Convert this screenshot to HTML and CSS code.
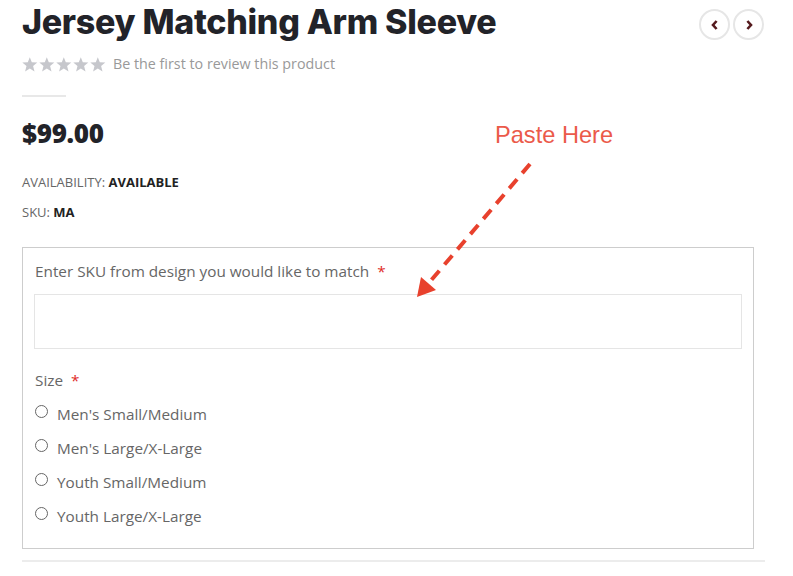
FILE: index.html
```html
<!DOCTYPE html>
<html>
<head>
<meta charset="utf-8">
<link rel="stylesheet" href="styles.css">
</head>
<body>
<div class="page">
  <div class="head">
    <h1 class="title">Jersey Matching Arm Sleeve</h1>
    <div class="nav">
      <span class="navbtn"><svg width="12" height="12" viewBox="0 0 12 12"><path d="M7.6 2 L4 6 L7.6 10" fill="none" stroke="#551a1e" stroke-width="2.6"/></svg></span>
      <span class="navbtn"><svg width="12" height="12" viewBox="0 0 12 12"><path d="M4.4 2 L8 6 L4.4 10" fill="none" stroke="#551a1e" stroke-width="2.6"/></svg></span>
    </div>
  </div>
  <div class="rating">
    <span class="stars">
      <svg width="85" height="16" viewBox="0 0 85 16">
        <g fill="#c6c7cc">
          <path id="st" d="M7.8 0.2 L9.8 5.3 L15.3 5.6 L11.1 9.1 L12.5 14.5 L7.8 11.5 L3.1 14.5 L4.5 9.1 L0.3 5.6 L5.8 5.3 Z"/>
          <use href="#st" x="17"/>
          <use href="#st" x="34"/>
          <use href="#st" x="51"/>
          <use href="#st" x="68"/>
        </g>
      </svg>
    </span>
    <span class="review">Be the first to review this product</span>
  </div>
  <div class="shortline"></div>
  <div class="price">$99.00</div>
  <div class="meta">AVAILABILITY: <b>AVAILABLE</b></div>
  <div class="meta sku">SKU: <b>MA</b></div>
  <div class="options">
    <div class="label">Enter SKU from design you would like to match <span class="req">*</span></div>
    <div class="input"></div>
    <div class="label size">Size <span class="req">*</span></div>
    <div class="radios">
      <label class="radio"><span class="circle"></span>Men's Small/Medium</label>
      <label class="radio"><span class="circle"></span>Men's Large/X-Large</label>
      <label class="radio"><span class="circle"></span>Youth Small/Medium</label>
      <label class="radio"><span class="circle"></span>Youth Large/X-Large</label>
    </div>
  </div>
  <div class="bottomline"></div>

  <div class="annot-text">Paste Here</div>
  <svg class="annot-arrow" width="793" height="576" viewBox="0 0 793 576">
    <line x1="530" y1="164" x2="428" y2="284" stroke="#e8412d" stroke-width="4" stroke-dasharray="12 8"/>
    <polygon points="417,297 421,277 436,290" fill="#e8412d"/>
  </svg>
</div>
</body>
</html>
```
FILE: styles.css
```css
html, body { margin: 0; padding: 0; background: #fff; }
body { font-family: "Open Sans", "Liberation Sans", sans-serif; color: #222; }
.page { position: relative; width: 793px; height: 576px; padding: 0 28px 0 22px; box-sizing: border-box; overflow: hidden; }
.head { display: flex; justify-content: space-between; align-items: flex-start; }
.title { margin: 0; font-family: "Inter", sans-serif; font-weight: 800; font-size: 34px; line-height: 44px; color: #222329; letter-spacing: -0.3px; }
.nav { display: flex; gap: 3px; margin-top: 9px; margin-right: 1px; }
.navbtn { width: 27px; height: 27px; border: 2px solid #e6e6e6; border-radius: 50%; display: flex; align-items: center; justify-content: center; }
.rating { display: flex; align-items: center; gap: 6px; margin-top: 10px; height: 20px; }
.stars { display: flex; padding-top: 1px; }
.review { font-size: 14.3px; color: #999; line-height: 20px; }
.shortline { width: 44px; height: 2px; background: #e8e8e8; margin-top: 21px; }
.price { font-family: "Open Sans", sans-serif; font-weight: 800; font-size: 26px; line-height: 32px; margin-top: 20px; color: #222329; letter-spacing: -0.3px; }
.meta { font-size: 13px; color: #666; margin-top: 25px; line-height: 16px; }
.meta b { color: #222; font-weight: 700; }
.meta.sku { margin-top: 14px; }
.options { margin-top: 27px; width: 732px; border: 1px solid #cdcdcd; box-sizing: border-box; padding: 13px 11px 22px 11px; }
.label { font-size: 15.3px; color: #666; line-height: 20px; padding-left: 1px; }
.req { color: #e02b27; margin-left: 4px; }
.input { margin-top: 13px; height: 55px; border: 1px solid #e5e5e5; box-sizing: border-box; }
.label.size { margin-top: 21px; }
.radios { display: flex; flex-direction: column; gap: 14px; margin-top: 14px; }
.radio { display: flex; align-items: center; font-size: 15.3px; color: #666; line-height: 20px; }
.circle { width: 11px; height: 11px; border: 1px solid #666; border-radius: 50%; margin: -5px 9px 0 1px; flex: none; }
.bottomline { margin-top: 11px; width: 743px; height: 2px; background: #ececec; }
.annot-text { position: absolute; left: 495px; top: 122px; font-family: "Liberation Sans", Arial, sans-serif; font-size: 23.6px; line-height: 27px; color: #eb5a4a; }
.annot-arrow { position: absolute; left: 0; top: 0; }
```
